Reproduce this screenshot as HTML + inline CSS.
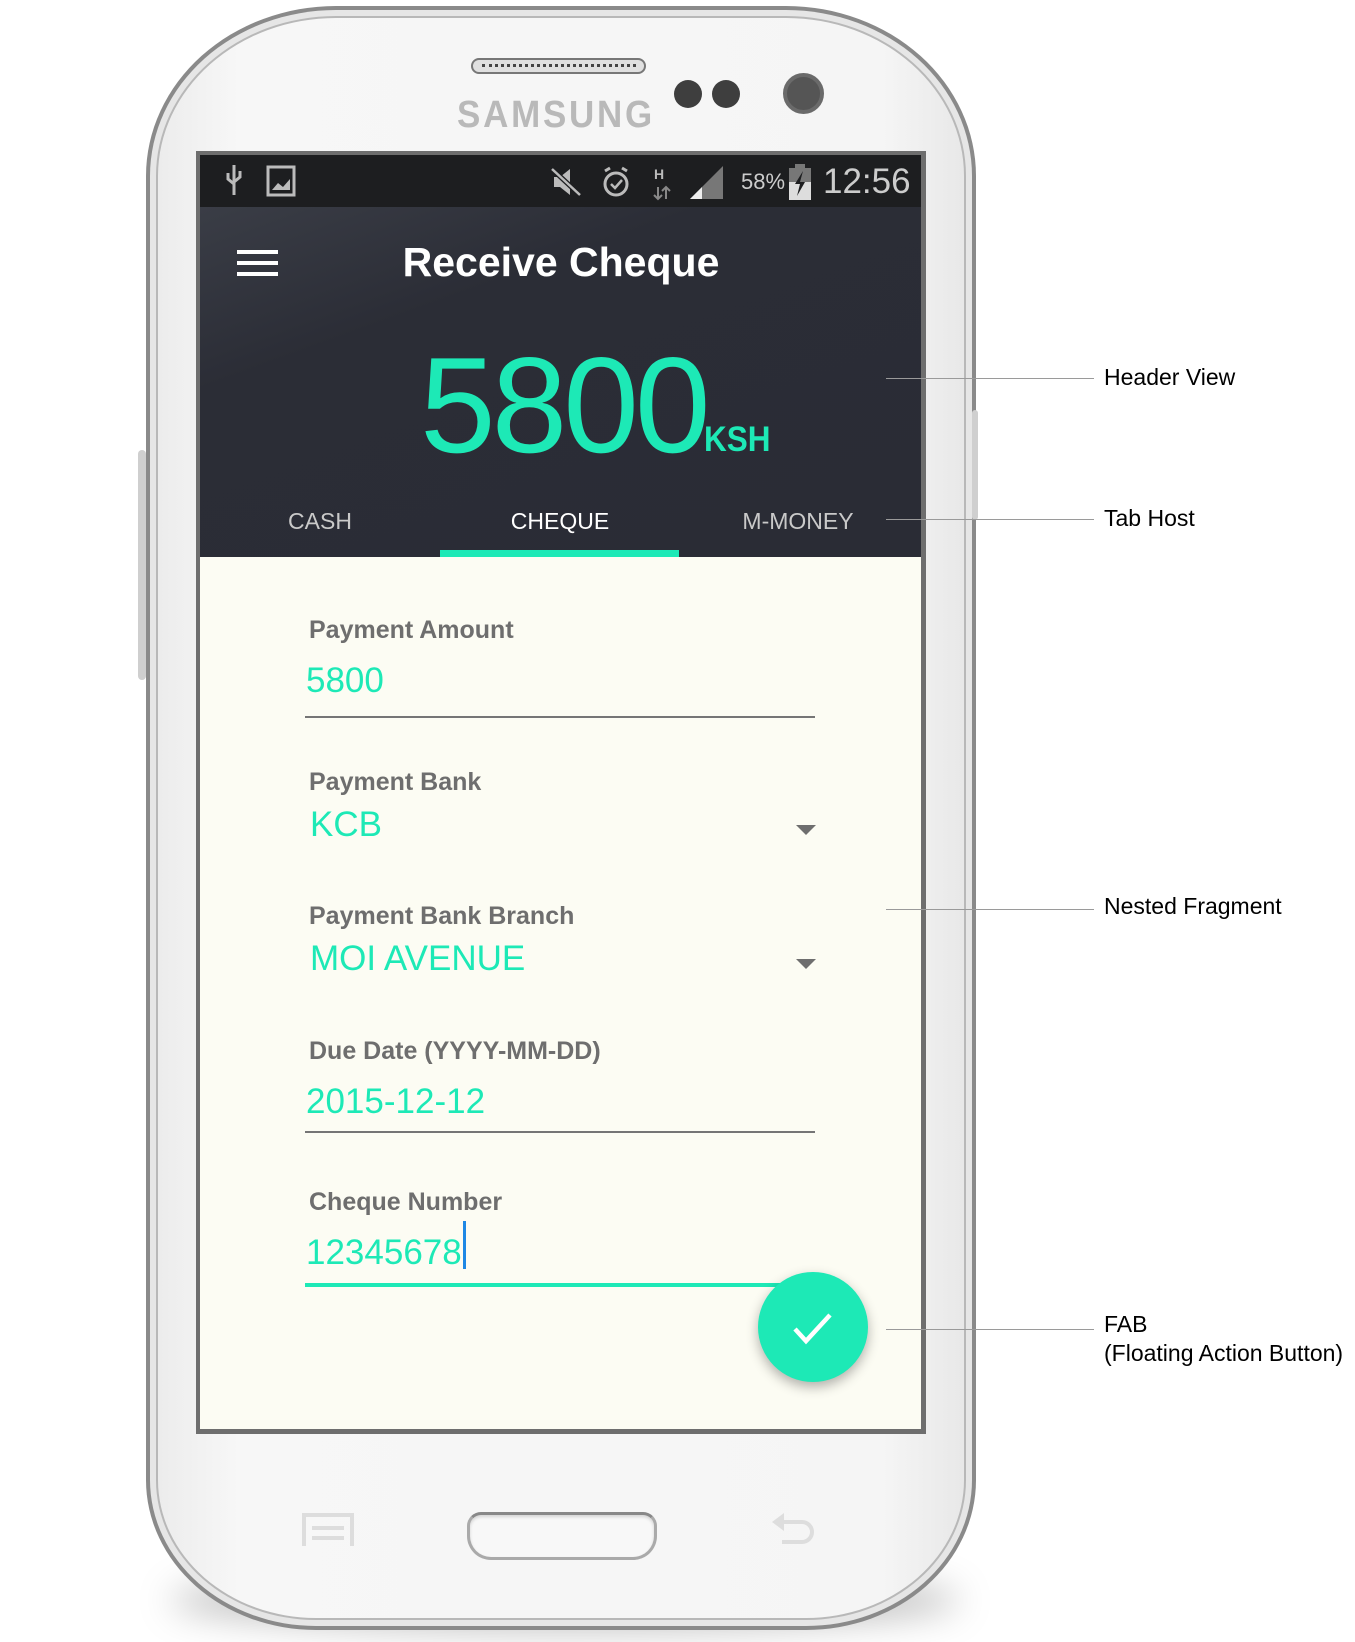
<!DOCTYPE html>
<html><head><meta charset="utf-8"><style>
*{margin:0;padding:0;box-sizing:border-box}
body{width:1355px;height:1642px;background:#fff;position:relative;overflow:hidden;font-family:"Liberation Sans",sans-serif}
.a{position:absolute;white-space:nowrap;line-height:1}
.lbl{font-size:25px;font-weight:bold;color:#6e6e6e;left:309px}
.val{font-size:35px;color:#1de9b6;left:306px}
.ul{position:absolute;left:305px;width:510px;height:2px;background:#757575}
.ann{font-size:23px;color:#000;left:1104px}
.ln{position:absolute;left:886px;width:208px;height:1px;background:#9a9a9a}
.arr{position:absolute;left:796px;width:0;height:0;border-left:10px solid transparent;border-right:10px solid transparent;border-top:10px solid #6e6e6e}
</style></head><body>
<div style="position:absolute;left:170px;top:1570px;width:790px;height:60px;border-radius:50%;background:rgba(0,0,0,0.25);filter:blur(18px)"></div>
<div style="position:absolute;left:146px;top:6px;width:830px;height:1624px;border-radius:190px 190px 170px 170px/170px 170px 150px 150px;background:#8a8a8a"></div>
<div style="position:absolute;left:150px;top:10px;width:822px;height:1616px;border-radius:186px 186px 166px 166px/166px 166px 146px 146px;background:#e6e6e6"></div>
<div style="position:absolute;left:156px;top:16px;width:810px;height:1604px;border-radius:180px 180px 160px 160px/160px 160px 140px 140px;background:linear-gradient(90deg,#ececec,#f7f7f7 10%,#f5f5f5 90%,#e8e8e8);border:2px solid #b8b8b8"></div>
<div style="position:absolute;left:138px;top:450px;width:8px;height:230px;border-radius:4px;background:#cfcfcf"></div>
<div style="position:absolute;left:972px;top:410px;width:6px;height:110px;border-radius:3px;background:#cfcfcf"></div>
<div style="position:absolute;left:471px;top:58px;width:175px;height:16px;border-radius:8px;background:#e0e0e0;border:2px solid #777"></div>
<div style="position:absolute;left:482px;top:64px;width:154px;height:3px;border-top:3px dotted #444"></div>
<div class="a" style="left:457px;top:96px;font-size:38px;font-weight:bold;color:#b9b9b9;letter-spacing:3px;transform:scaleX(0.92);transform-origin:left">SAMSUNG</div>
<div style="position:absolute;left:674px;top:80px;width:28px;height:28px;border-radius:50%;background:#3e3e3e"></div>
<div style="position:absolute;left:712px;top:80px;width:28px;height:28px;border-radius:50%;background:#3e3e3e"></div>
<div style="position:absolute;left:783px;top:73px;width:41px;height:41px;border-radius:50%;background:#555;border:4px solid #6a6a6a"></div>
<div style="position:absolute;left:196px;top:151px;width:730px;height:1283px;background:#6e6e6e"></div>
<div style="position:absolute;left:200px;top:155px;width:721px;height:1274px;background:#fcfcf3;overflow:hidden">
  <div style="position:absolute;left:0;top:0;width:721px;height:52px;background:#1d1e20"></div>
  <div style="position:absolute;left:0;top:52px;width:721px;height:350px;background:linear-gradient(160deg,#3a3d46 0%,#2b2d36 30%,#2a2c35 100%)"></div>
</div>
<svg style="position:absolute;left:220px;top:163px" width="100" height="36" viewBox="0 0 100 36">
 <path d="M14 2v30M8 10v6l6 5M20 8v6l-6 5" stroke="#bbb" stroke-width="3" fill="none"/>
 <rect x="48" y="4" width="26" height="28" fill="none" stroke="#bbb" stroke-width="3"/>
 <path d="M52 27l6-7 5 4 7-8v11z" fill="#bbb"/>
</svg>
<svg style="position:absolute;left:550px;top:165px" width="270" height="36" viewBox="0 0 270 36">
 <path d="M4 12h6l10-8v26l-10-8H4z" fill="#bbb"/><path d="M2 4l28 26" stroke="#1d1e20" stroke-width="5"/><path d="M2 4l28 26" stroke="#bbb" stroke-width="2.5"/>
 <circle cx="66" cy="19" r="11" fill="none" stroke="#bbb" stroke-width="3"/><path d="M61 19l4 4 7-8" stroke="#bbb" stroke-width="2.5" fill="none"/><path d="M55 6l5-3M77 6l-5-3" stroke="#bbb" stroke-width="3"/>
 <text x="104" y="14" font-family="Liberation Sans" font-weight="bold" font-size="14" fill="#bbb">H</text>
 <path d="M108 22v12M104 30l4 4 4-4M116 34V22M112 26l4-4 4 4" stroke="#888" stroke-width="2" fill="none"/>
 <path d="M140 34L173 1v33z" fill="#777"/><path d="M140 34l12-12v12z" fill="#eee"/>
</svg>
<div class="a" style="left:741px;top:171px;font-size:22px;color:#ccc">58%</div>
<svg style="position:absolute;left:788px;top:164px" width="24" height="36" viewBox="0 0 24 36"><rect x="7" y="0" width="10" height="4" fill="#777"/><rect x="1" y="4" width="22" height="32" fill="#ddd"/><rect x="1" y="4" width="22" height="14" fill="#777"/><path d="M15 7l-8 13h5l-3 12 8-14h-5z" fill="#1d1e20"/></svg>
<div class="a" style="left:823px;top:164px;font-size:35px;color:#ccc">12:56</div>
<div style="position:absolute;left:237px;top:250px;width:41px;height:4px;background:#fff;box-shadow:0 11px 0 #fff,0 22px 0 #fff"></div>
<div class="a" style="left:0;width:1122px;text-align:center;top:242px;font-size:41px;font-weight:bold;color:#fff">Receive Cheque</div>
<div class="a" style="left:420px;top:337px;font-size:136px;color:#1de9b6;letter-spacing:-4px">5800</div>
<div class="a" style="left:704px;top:422px;font-size:35px;font-weight:bold;color:#1de9b6;transform:scaleX(0.9);transform-origin:left">KSH</div>
<div class="a" style="left:220px;width:200px;text-align:center;top:510px;font-size:23px;color:#c9c9c9">CASH</div>
<div class="a" style="left:460px;width:200px;text-align:center;top:510px;font-size:23px;color:#fff">CHEQUE</div>
<div class="a" style="left:698px;width:200px;text-align:center;top:510px;font-size:23px;color:#c9c9c9">M-MONEY</div>
<div style="position:absolute;left:440px;top:550px;width:239px;height:7px;background:#1de9b6"></div>
<div class="a lbl" style="top:618px">Payment Amount</div>
<div class="a val" style="top:663px">5800</div>
<div class="ul" style="top:716px"></div>
<div class="a lbl" style="top:770px">Payment Bank</div>
<div class="a val" style="top:807px;left:310px">KCB</div>
<div class="arr" style="top:825px"></div>
<div class="a lbl" style="top:904px">Payment Bank Branch</div>
<div class="a val" style="top:941px;left:310px">MOI AVENUE</div>
<div class="arr" style="top:959px"></div>
<div class="a lbl" style="top:1039px">Due Date (YYYY-MM-DD)</div>
<div class="a val" style="top:1084px">2015-12-12</div>
<div class="ul" style="top:1131px"></div>
<div class="a lbl" style="top:1190px">Cheque Number</div>
<div class="a val" style="top:1235px">12345678</div>
<div style="position:absolute;left:463px;top:1221px;width:3px;height:48px;background:#1e88e5"></div>
<div style="position:absolute;left:305px;top:1283px;width:500px;height:4px;background:#1de9b6"></div>
<div style="position:absolute;left:758px;top:1272px;width:110px;height:110px;border-radius:50%;background:#1de9b6;box-shadow:0 5px 12px rgba(0,0,0,0.3)"></div>
<svg style="position:absolute;left:790px;top:1305px" width="46" height="46" viewBox="0 0 46 46"><path d="M5 24l11 12 24-26" stroke="#fff" stroke-width="4.5" fill="none"/></svg>
<svg style="position:absolute;left:300px;top:1510px" width="56" height="40" viewBox="0 0 56 40"><path d="M4 36V5h48v31" stroke="#ddd" stroke-width="4" fill="none"/><path d="M12 18h32M12 28h32" stroke="#ddd" stroke-width="4"/></svg>
<div style="position:absolute;left:467px;top:1512px;width:190px;height:48px;border-radius:14px 14px 24px 24px;border:3px solid #aaa;border-top-color:#888;background:#f8f8f8;box-shadow:inset 0 2px 3px rgba(0,0,0,0.15)"></div>
<svg style="position:absolute;left:770px;top:1510px" width="50" height="40" viewBox="0 0 50 40"><path d="M8 12h24a10 10 0 0 1 0 20h-20" stroke="#ddd" stroke-width="4" fill="none"/><path d="M2 12l12-9v18z" fill="#ddd"/></svg>
<div class="ln" style="top:378px"></div><div class="a ann" style="top:366px">Header View</div>
<div class="ln" style="top:519px"></div><div class="a ann" style="top:507px">Tab Host</div>
<div class="ln" style="top:909px"></div><div class="a ann" style="top:895px">Nested Fragment</div>
<div class="ln" style="top:1329px"></div><div class="a ann" style="top:1313px">FAB</div>
<div class="a ann" style="top:1342px">(Floating Action Button)</div>
</body></html>
